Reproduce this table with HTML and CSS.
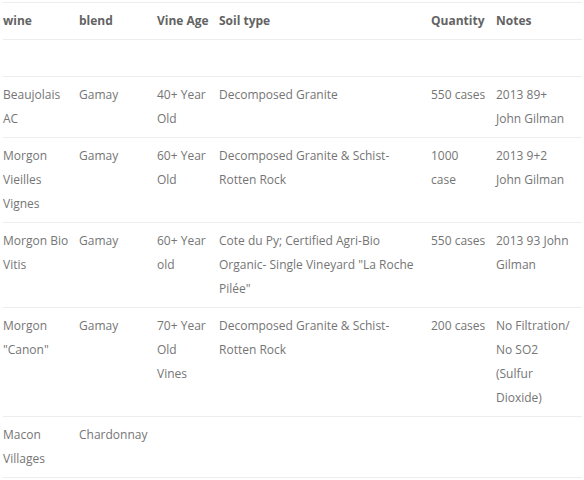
FILE: index.html
```html
<!DOCTYPE html>
<html>
<head>
<meta charset="utf-8">
<link rel="stylesheet" href="styles.css">
</head>
<body>
<div class="wrap">
<table class="wines">
<colgroup>
<col class="c1"><col class="c2"><col class="c3"><col class="c4"><col class="c5"><col class="c6">
</colgroup>
<thead>
<tr><th>wine</th><th>blend</th><th>Vine Age</th><th>Soil type</th><th>Quantity</th><th>Notes</th></tr>
</thead>
<tbody>
<tr><td>&nbsp;</td><td></td><td></td><td></td><td></td><td></td></tr>
<tr><td>Beaujolais AC</td><td>Gamay</td><td>40+ Year Old</td><td>Decomposed Granite</td><td>550 cases</td><td>2013 89+ John Gilman</td></tr>
<tr><td>Morgon Vieilles Vignes</td><td>Gamay</td><td>60+ Year Old</td><td>Decomposed Granite &amp; Schist-Rotten Rock</td><td>1000 case</td><td>2013 9+2 John Gilman</td></tr>
<tr><td>Morgon Bio Vitis</td><td>Gamay</td><td>60+ Year old</td><td>Cote du Py; Certified Agri-Bio Organic- Single Vineyard "La Roche Pilée"</td><td>550 cases</td><td>2013 93 John Gilman</td></tr>
<tr><td>Morgon "Canon"</td><td>Gamay</td><td>70+ Year Old Vines</td><td>Decomposed Granite &amp; Schist-Rotten Rock</td><td>200 cases</td><td>No Filtration/ No SO2 (Sulfur Dioxide)</td></tr>
<tr><td>Macon Villages</td><td>Chardonnay</td><td></td><td></td><td></td><td></td></tr>
</tbody>
</table>
</div>
</body>
</html>
```

FILE: styles.css
```css
html, body {
  margin: 0;
  padding: 0;
  background: #ffffff;
}
.wrap {
  padding: 2px 2px 0 3px;
}
.wines {
  width: 579px;
  table-layout: fixed;
  border-collapse: collapse;
  border-spacing: 0;
  border-top: 1px solid #ededed;
  border-bottom: 1px solid #ededed;
  font-family: "Open Sans", "Liberation Sans", sans-serif;
  font-size: 12px;
  line-height: 24px;
  color: #757575;
}
.c1 { width: 76px; }
.c2 { width: 78px; }
.c3 { width: 62px; }
.c4 { width: 212px; }
.c5 { width: 65px; }
.c6 { width: 86px; }
.wines th {
  text-align: left;
  font-weight: bold;
  color: #636363;
  padding: 6px 10px 6px 0;
}
.wines td {
  border-top: 1px solid #ededed;
  padding: 6px 10px 6px 0;
  vertical-align: top;
}
```
